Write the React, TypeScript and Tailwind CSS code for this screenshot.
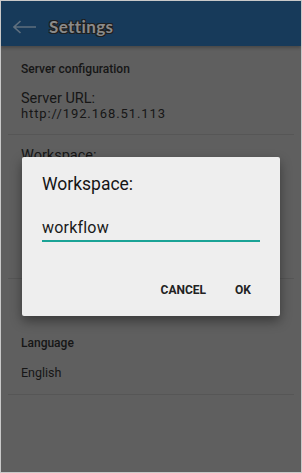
import React from 'react';

const Divider = () => <div className="mx-[7px] h-px bg-[#565656]" />;

export default function App() {
    return (
        <div className="relative w-[302px] h-[473px] overflow-hidden border border-[#c9c9c9] bg-[#5f5f5f] text-[#161616] font-['Roboto',sans-serif]">
            {/* app bar */}
            <div className="h-[45px] bg-[#173a5a] flex items-center pt-[6px] shadow-[0_2px_3px_rgba(0,0,0,0.25)]">
                <svg width="24" height="14" viewBox="0 0 24 14" className="ml-[12px]" fill="none" stroke="#5f6f7e" strokeWidth="1.6">
                    <path d="M1 7h22M7.5 1L1 7l6.5 6" />
                </svg>
                <span className="ml-[12px] text-[17px] font-bold tracking-[0.4px] text-[#8a8a8a] font-['Lato',sans-serif] [text-shadow:1px_1px_0_#1e1e1e,-1px_-1px_0_#1e1e1e,1px_-1px_0_#1e1e1e,-1px_1px_0_#1e1e1e]">
                    Settings
                </span>
            </div>

            {/* preference list */}
            <div className="pt-[15px] px-[20px] pb-[13px]">
                <div className="text-[12px] leading-[16px] font-medium">Server configuration</div>
                <div className="mt-[13px] text-[14.5px] leading-[17px]">Server URL:</div>
                <div className="text-[13px] leading-[14px] tracking-[0.9px]">http://192.168.51.113</div>
            </div>
            <Divider />
            <div className="h-[143px] px-[20px] pt-[13px]">
                <div className="text-[14.5px] leading-[16px]">Workspace:</div>
            </div>
            <Divider />
            <div className="h-[115px] px-[20px] pt-[56px]">
                <div className="text-[12px] leading-[16px] font-medium">Language</div>
                <div className="mt-[14px] text-[12.5px] leading-[16px]">English</div>
            </div>
            <Divider />

            {/* dialog */}
            <div className="absolute left-[21px] top-[156px] w-[258px] h-[159px] bg-[#eeeeee] rounded-[2px] shadow-[0_5px_12px_rgba(0,0,0,0.4)] pt-[16px] px-[20px]">
                <div className="text-[17.5px] leading-[22px] text-[#151515]">Workspace:</div>
                <div className="mt-[23px] text-[16px] leading-[20px] text-[#1a1a1a] tracking-[0.2px]">workflow</div>
                <div className="mt-[2px] h-[2px] bg-[#1aa396]" />
                <div className="mt-[40px] flex justify-end gap-[29px] pr-[9px] text-[12px] leading-[16px] font-bold text-[#222]">
                    <span>CANCEL</span>
                    <span>OK</span>
                </div>
            </div>
        </div>
    );
}
